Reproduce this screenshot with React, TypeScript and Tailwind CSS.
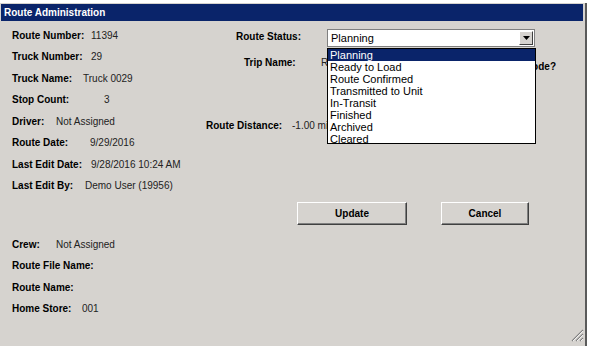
import React from 'react';

const font = { fontFamily: '"Liberation Sans", Arial, sans-serif' };

type Row = { label: string; value?: string; w: number };

const topRows: Row[] = [
  { label: 'Route Number:', value: '11394', w: 79 },
  { label: 'Truck Number:', value: '29', w: 79 },
  { label: 'Truck Name:', value: 'Truck 0029', w: 71 },
  { label: 'Stop Count:', value: '3', w: 92 },
  { label: 'Driver:', value: 'Not Assigned', w: 44 },
  { label: 'Route Date:', value: '9/29/2016', w: 78 },
  { label: 'Last Edit Date:', value: '9/28/2016 10:24 AM', w: 79 },
  { label: 'Last Edit By:', value: 'Demo User (19956)', w: 73 },
];

const bottomRows: Row[] = [
  { label: 'Crew:', value: 'Not Assigned', w: 44 },
  { label: 'Route File Name:', w: 120 },
  { label: 'Route Name:', w: 90 },
  { label: 'Home Store:', value: '001', w: 70 },
];

const statuses = [
  'Planning',
  'Ready to Load',
  'Route Confirmed',
  'Transmitted to Unit',
  'In-Transit',
  'Finished',
  'Archived',
  'Cleared',
];

function FieldRow({ row }: { row: Row }) {
  return (
    <div className="flex items-center h-[21.5px] text-[10px] leading-[12px]">
      <span className="font-bold text-black shrink-0" style={{ width: row.w }}>
        {row.label}
      </span>
      {row.value && <span className="text-[#222] whitespace-nowrap">{row.value}</span>}
    </div>
  );
}

function Button({ label, width }: { label: string; width: number }) {
  return (
    <button
      className="h-[23px] bg-[#d6d3cf] border border-t-white border-l-white border-r-[#404040] border-b-[#404040] shadow-[inset_-1px_-1px_0_#808080] text-[10px] font-bold text-black"
      style={{ width }}
    >
      {label}
    </button>
  );
}

export default function App() {
  return (
    <div className="relative w-[589px] h-[346px] bg-white overflow-hidden" style={font}>
      <div className="mt-[3px] w-[587px] h-[343px] bg-[#d6d3cf] border-r-2 border-[#5a5a5a] flex flex-col">
        <div className="mt-[1px] ml-[1px] mr-[2px] h-[17px] bg-[#0a246a] text-white text-[10px] font-bold leading-[17px] pl-[3px]">
          Route Administration
        </div>

        <div className="flex">
          <div className="w-[194px] pl-[12px] pt-[4px] flex flex-col">
            {topRows.map((r) => (
              <FieldRow key={r.label} row={r} />
            ))}
          </div>

          <div className="flex-1 flex flex-col text-[10px] leading-[12px]">
            <div className="flex items-start mt-[8px] pl-[42px]">
              <span className="font-bold w-[91px] pt-[2px]">Route Status:</span>
              <div className="relative w-[208px] h-[18px] bg-white border border-[#808080] text-[11px] leading-[16px] pl-[3px] text-black">
                Planning
                <div className="absolute right-[1px] top-[1px] w-[14px] h-[14px] bg-[#d6d3cf] border border-t-white border-l-white border-r-[#404040] border-b-[#404040] flex items-center justify-center">
                  <svg width="7" height="4" viewBox="0 0 7 4">
                    <path d="M0 0h7L3.5 4z" fill="#000" />
                  </svg>
                </div>
              </div>
            </div>

            <div className="flex items-start mt-[10px] pl-[50px]">
              <span className="font-bold w-[77px] shrink-0">Trip Name:</span>
              <span className="text-[#222] w-[6px] overflow-hidden whitespace-nowrap shrink-0">Route 29</span>
              <div className="ml-[209px] w-[20px] mt-[4px] overflow-hidden flex justify-end shrink-0">
                <span className="font-bold whitespace-nowrap">Delivery Mode?</span>
              </div>
            </div>

            <div className="flex items-start mt-[47px] pl-[12px]">
              <span className="font-bold w-[86px] shrink-0">Route Distance:</span>
              <span className="text-[#222] w-[35px] overflow-hidden whitespace-nowrap">-1.00 miles</span>
            </div>
          </div>
        </div>

        <div className="flex mt-[5px] pl-[297px] gap-[34px]">
          <Button label="Update" width={110} />
          <Button label="Cancel" width={88} />
        </div>

        <div className="pl-[12px] mt-[9px] flex flex-col">
          {bottomRows.map((r) => (
            <FieldRow key={r.label} row={r} />
          ))}
        </div>
      </div>

      {/* open dropdown list */}
      <div className="absolute left-[327px] top-[48px] w-[209px] h-[96px] bg-white border border-black text-[11px] leading-[12px] text-black">
        {statuses.map((s, i) => (
          <div
            key={s}
            className={i === 0 ? 'h-[12px] pl-[2px] bg-[#0a246a] text-white' : 'h-[12px] pl-[2px]'}
          >
            {s}
          </div>
        ))}
      </div>

      {/* resize grip */}
      <svg className="absolute left-[571px] top-[328px]" width="13" height="14" viewBox="0 0 13 14">
        <path d="M12 2L1 13M12 6L5 13M12 10L9 13" stroke="#808080" strokeWidth="1.2" />
        <path d="M12 3L2 13M12 7L6 13M12 11L10 13" stroke="#ffffff" strokeWidth="0.8" />
      </svg>
    </div>
  );
}
